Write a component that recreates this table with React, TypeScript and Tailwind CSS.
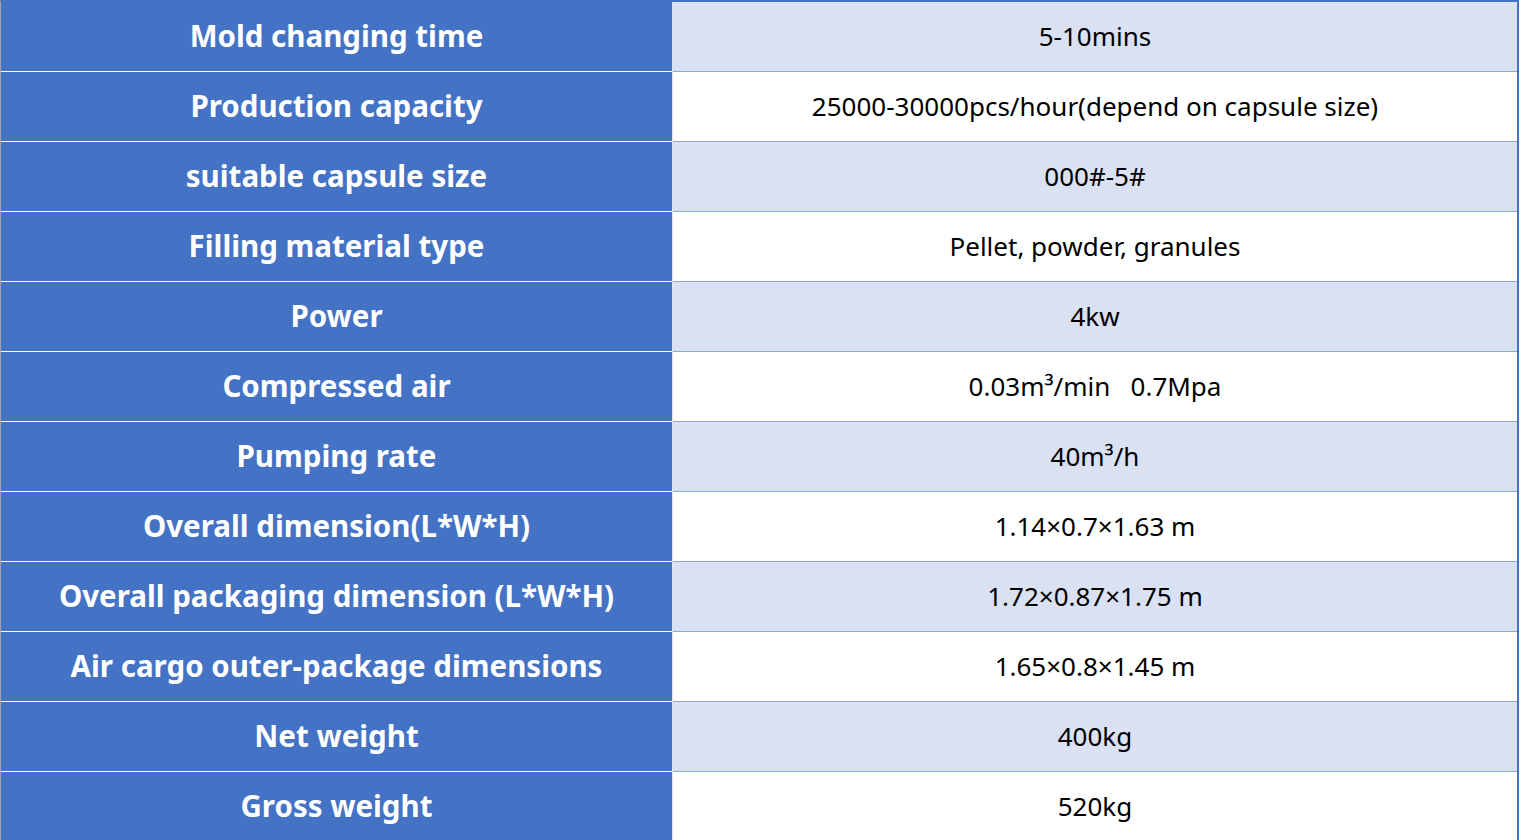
const rows: [string, string][] = [
  ['Mold changing time', '5-10mins'],
  ['Production capacity', '25000-30000pcs/hour(depend on capsule size)'],
  ['suitable capsule size', '000#-5#'],
  ['Filling material type', 'Pellet, powder, granules'],
  ['Power', '4kw'],
  ['Compressed air', '0.03m³/min\u00a0\u00a0 0.7Mpa'],
  ['Pumping rate', '40m³/h'],
  ['Overall dimension(L*W*H)', '1.14×0.7×1.63 m'],
  ['Overall packaging dimension (L*W*H)', '1.72×0.87×1.75 m'],
  ['Air cargo outer-package dimensions', '1.65×0.8×1.45 m'],
  ['Net weight', '400kg'],
  ['Gross weight', '520kg'],
];

export default function App() {
  return (
    <div className="h-[840px] w-[1520px] overflow-hidden bg-white font-['Noto_Sans',sans-serif]">
      <div className="w-[1519px] border-t-2 border-l border-r-2 border-t-[#4472C4] border-l-[#a6a6a6] border-r-[#4472C4]">
        {rows.map(([label, value], i) => (
          <div key={label} className="flex h-[70px]">
            <div className="flex w-[671px] items-center justify-center border-b border-white bg-[#4472C4] pb-px text-[29.5px] font-bold text-white">
              {label}
            </div>
            <div className="w-px bg-[#dfe6f3]" />
            <div
              className={`flex flex-1 items-center justify-center border-b border-[#8EA9DB] pb-px text-[26px] text-black ${
                i % 2 === 0 ? 'bg-[#D9E1F2]' : 'bg-white'
              }`}
            >
              {value}
            </div>
          </div>
        ))}
      </div>
    </div>
  );
}
